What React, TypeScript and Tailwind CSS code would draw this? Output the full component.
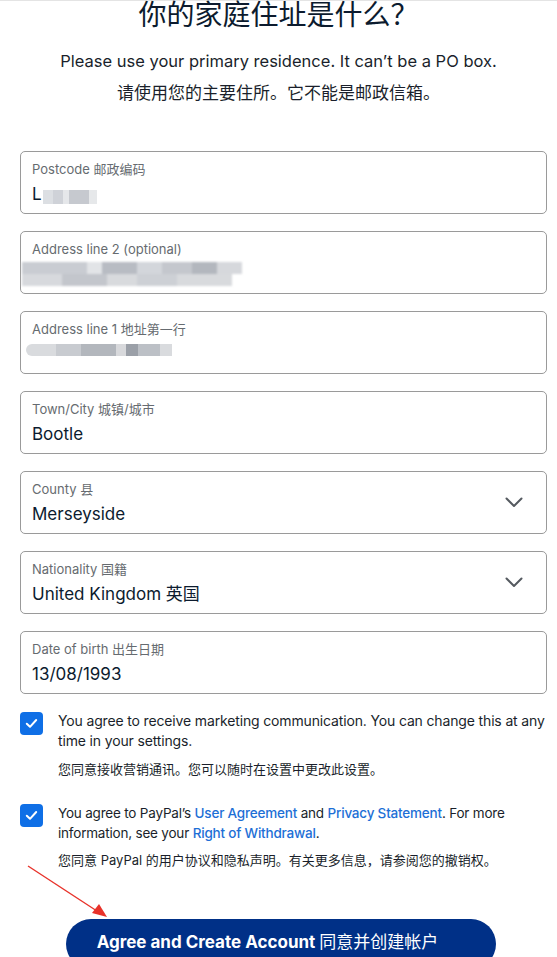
import React from "react";

function Field({ label, value, select, blur }: { label: string; value?: React.ReactNode; select?: boolean; blur?: React.ReactNode }) {
  return (
    <div className="relative flex h-[63px] items-center rounded-[5px] border border-[#9a9a9a] bg-white pl-[11px] pr-[20px]">
      <div className="flex flex-1 flex-col pt-[1px]">
        <div className="text-[13px] leading-[18px] text-[#666b70]">{label}</div>
        <div className="mt-[4px] h-[24px] text-[17px] leading-[24px] text-[#0c1b2e]">{value}{blur}</div>
      </div>
      {select && (
        <svg width="18" height="11" viewBox="0 0 18 11" className="mr-[3px]">
          <path d="M1.5 1.5 L9 9 L16.5 1.5" fill="none" stroke="#555a60" strokeWidth="2" strokeLinecap="round" strokeLinejoin="round" />
        </svg>
      )}
    </div>
  );
}

function Check() {
  return (
    <div className="mt-[1px] flex h-[23px] w-[23px] shrink-0 items-center justify-center rounded-[4px] bg-[#0f6fe6]">
      <svg width="13" height="11" viewBox="0 0 13 11">
        <path d="M1.8 5.8 L5 8.8 L11.2 2" fill="none" stroke="white" strokeWidth="2" strokeLinecap="round" strokeLinejoin="round" />
      </svg>
    </div>
  );
}

export default function App() {
  const font = { fontFamily: "Inter, 'Noto Sans CJK SC', sans-serif" };
  return (
    <div className="relative h-[957px] w-[557px] overflow-hidden bg-white" style={font}>
      <div className="h-px w-full bg-[#e4e4e4]" />
      <h1 className="mt-[0px] text-center text-[28px] leading-[29px] text-[#0c1b2e]">你的家庭住址是什么？</h1>
      <p className="mt-[18px] text-center text-[16.5px] leading-[26px] text-[#1a1f2b]">Please use your primary residence. It can’t be a PO box.</p>
      <p className="mt-[6px] text-center text-[17px] leading-[26px] text-[#1a1f2b]">请使用您的主要住所。它不能是邮政信箱。</p>

      <div className="mt-[45px] flex flex-col gap-[17px] pl-[20px] pr-[10px]">
        <Field
          label="Postcode 邮政编码"
          value={<span>L</span>}
          blur={<span className="ml-[1px] inline-flex h-[16px] translate-y-[2px] items-center gap-0 align-middle"><span className="h-[14px] w-[10px] bg-[#dcdfe3]" /><span className="h-[14px] w-[10px] bg-[#cfd2d8]" /><span className="h-[14px] w-[6px] bg-[#e5e7ea]" /><span className="h-[14px] w-[20px] bg-[#c6c9cf]" /><span className="h-[14px] w-[8px] bg-[#e6e8ea]" /></span>}
        />
        <Field
          label="Address line 2 (optional)"
          blur={
            <span className="-ml-[10px] flex flex-col blur-[1px]">
              <span className="flex h-[12px]"><span className="w-[65px] bg-[#c9ccd2]" /><span className="w-[15px] bg-[#e2e4e7]" /><span className="w-[35px] bg-[#b8bcc3]" /><span className="w-[25px] bg-[#d3d6db]" /><span className="w-[30px] bg-[#c4c7cd]" /><span className="w-[25px] bg-[#b3b7be]" /><span className="w-[25px] bg-[#d6d8dc]" /></span>
              <span className="flex h-[12px]"><span className="w-[40px] bg-[#d7d9dd]" /><span className="w-[45px] bg-[#c3c6cc]" /><span className="w-[30px] bg-[#d8dadd]" /><span className="w-[40px] bg-[#cdd0d5]" /><span className="w-[55px] bg-[#d8dadd]" /></span>
            </span>
          }
        />
        <Field
          label="Address line 1 地址第一行"
          blur={
            <span className="-ml-[6px] mt-[2px] flex h-[12px] blur-[0.5px]"><span className="w-[30px] rounded-l-full bg-[#d9dbde]" /><span className="w-[25px] bg-[#c8cbd0]" /><span className="w-[35px] bg-[#b3b7bd]" /><span className="w-[10px] bg-[#d8d9dc]" /><span className="w-[12px] bg-[#9ba0a8]" /><span className="w-[22px] bg-[#bcc0c6]" /><span className="w-[12px] bg-[#d9dbde]" /></span>
          }
        />
        <Field label="Town/City 城镇/城市" value="Bootle" />
        <Field label="County 县" value="Merseyside" select />
        <Field label="Nationality 国籍" value="United Kingdom 英国" select />
        <Field label="Date of birth 出生日期" value="13/08/1993" />
      </div>

      <div className="mt-[17px] flex gap-[15px] pl-[20px] pr-0">
        <Check />
        <div className="text-[14px] leading-[20px] tracking-[-0.15px] text-[#1a1f2b]">
          <p>You agree to receive marketing communication. You can change this at any time in your settings.</p>
          <p className="mt-[8px] text-[13px] leading-[20px] tracking-normal">您同意接收营销通讯。您可以随时在设置中更改此设置。</p>
        </div>
      </div>

      <div className="mt-[24px] flex gap-[15px] pl-[20px] pr-[10px]">
        <Check />
        <div className="text-[13.5px] leading-[20px] tracking-[-0.2px] text-[#1a1f2b]">
          <p>
            You agree to PayPal’s <span className="font-medium text-[#1d6fd6]">User Agreement</span> and{" "}
            <span className="font-medium text-[#1d6fd6]">Privacy Statement</span>. For more<br />information, see your{" "}
            <span className="font-medium text-[#1d6fd6]">Right of Withdrawal</span>.
          </p>
          <p className="mt-[7px] text-[13px] leading-[20px] tracking-normal">您同意 PayPal 的用户协议和隐私声明。有关更多信息，请参阅您的撤销权。</p>
        </div>
      </div>

      <div className="mt-[49px] flex justify-center pl-[4px]">
        <button className="h-[50px] w-[430px] rounded-full bg-[#003087] pb-[2px] pr-[26px] text-[17px] font-bold text-white">
          Agree and Create Account <span className="font-normal">同意并创建帐户</span>
        </button>
      </div>

      <svg className="pointer-events-none absolute left-0 top-[860px]" width="120" height="70" viewBox="0 0 120 70">
        <line x1="28" y1="6" x2="100" y2="53" stroke="#e8322a" strokeWidth="1.4" />
        <polygon points="107,57 92,53 99,44" fill="#e8322a" />
      </svg>
    </div>
  );
}
